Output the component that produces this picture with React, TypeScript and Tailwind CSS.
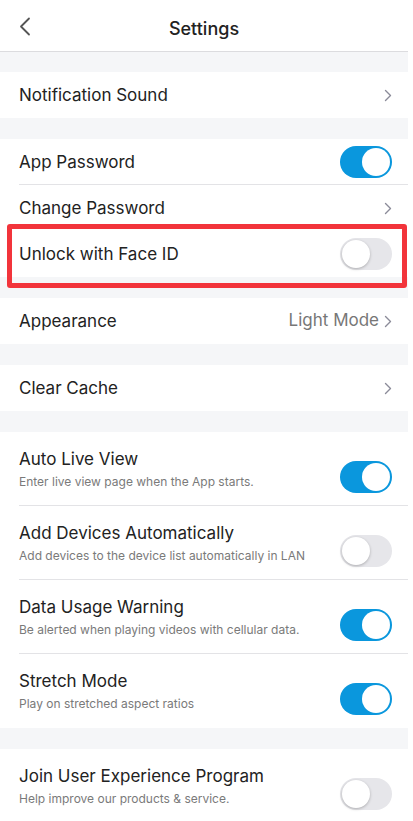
import React from 'react';

type Row = {
  label: string;
  sub?: string;
  toggle?: boolean;
  on?: boolean;
  value?: string;
  divider?: boolean;
  highlight?: boolean;
};

const groups: Row[][] = [
  [{ label: 'Notification Sound' }],
  [
    { label: 'App Password', toggle: true, on: true, divider: true },
    { label: 'Change Password' },
    { label: 'Unlock with Face ID', toggle: true, on: false, highlight: true },
  ],
  [{ label: 'Appearance', value: 'Light Mode' }],
  [{ label: 'Clear Cache' }],
  [
    { label: 'Auto Live View', sub: 'Enter live view page when the App starts.', toggle: true, on: true, divider: true },
    { label: 'Add Devices Automatically', sub: 'Add devices to the device list automatically in LAN', toggle: true, on: false, divider: true },
    { label: 'Data Usage Warning', sub: 'Be alerted when playing videos with cellular data.', toggle: true, on: true, divider: true },
    { label: 'Stretch Mode', sub: 'Play on stretched aspect ratios', toggle: true, on: true },
  ],
  [
    { label: 'Join User Experience Program', sub: 'Help improve our products & service.', toggle: true, on: false },
  ],
];

function Chevron() {
  return (
    <svg width="8" height="13" viewBox="0 0 8 13" fill="none">
      <path d="M1.5 1.5l5 5-5 5" stroke="#8b8b99" strokeWidth="1.4" strokeLinecap="round" strokeLinejoin="round" />
    </svg>
  );
}

function Toggle({ on }: { on?: boolean }) {
  if (on) {
    return (
      <div className="w-[52px] h-[32px] rounded-full bg-[#0a97dd] flex items-center justify-end pr-[2px] shrink-0">
        <div className="w-[28px] h-[28px] rounded-full bg-white" />
      </div>
    );
  }
  return (
    <div className="w-[52px] h-[32px] rounded-full bg-[#e6e6ea] flex items-center pl-[2px] shrink-0">
      <div className="w-[28px] h-[28px] rounded-full bg-white shadow-[0_1px_3px_rgba(0,0,0,0.25)]" />
    </div>
  );
}

function SettingRow({ row }: { row: Row }) {
  const right = row.toggle ? (
    <Toggle on={row.on} />
  ) : (
    <div className="flex items-center gap-[5px]">
      {row.value ? <span className="text-[17px] text-[#777]">{row.value}</span> : null}
      <Chevron />
    </div>
  );

  return (
    <div className="relative bg-white pl-[19px]">
      <div
        className={`flex justify-between pr-[16px] ${row.sub ? 'h-[74px] items-start pt-[16px]' : 'h-[46px] items-center'} ${
          row.divider ? 'border-b border-[#e3e3e6]' : ''
        }`}
      >
        <div className="flex flex-col">
          <span className="text-[17px] leading-[22px] text-[#222]">{row.label}</span>
          {row.sub ? (
            <span className="text-[12px] leading-[16px] text-[#7a7a7a] mt-[4px]">{row.sub}</span>
          ) : null}
        </div>
        <div className="self-center">{right}</div>
      </div>
      {row.highlight ? (
        <div className="absolute left-[7px] right-[1px] top-[-7px] bottom-[-11px] border-[5px] border-[#f2343b] rounded-[3px]" />
      ) : null}
    </div>
  );
}

export default function App() {
  return (
    <div className="w-[408px] min-h-[821px] bg-[#f5f6f8] font-['Inter',sans-serif]">
      <div className="h-[52px] bg-white border-b border-[#dcdcdf] flex items-center justify-center relative">
        <svg className="absolute left-[19px] top-[17px]" width="12" height="20" viewBox="0 0 12 20" fill="none">
          <path d="M10 1.5L2 9.5l8 8" stroke="#555" strokeWidth="1.8" strokeLinecap="round" strokeLinejoin="round" />
        </svg>
        <span className="text-[18px] font-medium text-[#222] pt-[5px]">Settings</span>
      </div>
      {groups.map((group, i) => (
        <div key={i} className={i === 0 ? 'pt-[20px]' : 'pt-[21px]'}>
          {group.map((row) => (
            <SettingRow key={row.label} row={row} />
          ))}
        </div>
      ))}
    </div>
  );
}
